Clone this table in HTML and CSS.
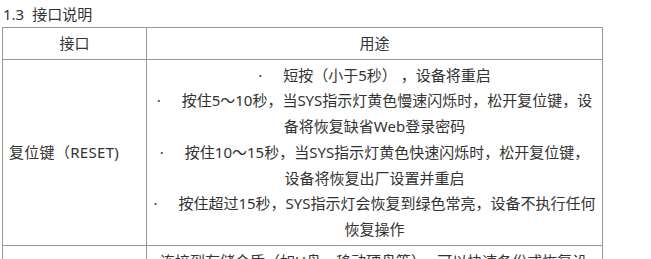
FILE: index.html
```html
<!DOCTYPE html>
<html lang="zh-CN">
<head>
<meta charset="utf-8">
<title>接口说明</title>
<link rel="stylesheet" href="styles.css">
</head>
<body>
<div class="page">
  <h3 class="title"><span class="num">1.3</span>接口说明</h3>
  <table class="spec">
    <colgroup>
      <col class="col-port">
      <col class="col-use">
    </colgroup>
    <thead>
      <tr>
        <th>接口</th>
        <th>用途</th>
      </tr>
    </thead>
    <tbody>
      <tr>
        <td class="name">复位键（RESET)</td>
        <td class="uses">
          <p class="item"><span class="dot">·</span>短按（小于5秒）&nbsp;，设备将重启</p>
          <p class="item"><span class="dot">·</span>按住5～10秒，当SYS指示灯黄色慢速闪烁时，松开复位键，设<br>备将恢复缺省Web登录密码</p>
          <p class="item"><span class="dot">·</span>按住10～15秒，当SYS指示灯黄色快速闪烁时，松开复位键，<br>设备将恢复出厂设置并重启</p>
          <p class="item"><span class="dot">·</span>按住超过15秒，SYS指示灯会恢复到绿色常亮，设备不执行任何<br>恢复操作</p>
        </td>
      </tr>
      <tr>
        <td class="name">USB接口</td>
        <td class="uses">
          <p class="item plain">连接到存储介质（如U盘、移动硬盘等），&nbsp;可以快速备份或恢复设<br>备配置</p>
        </td>
      </tr>
    </tbody>
  </table>
</div>
</body>
</html>
```
FILE: styles.css
```css
html, body {
  margin: 0;
  padding: 0;
  background: #ffffff;
}

body {
  font-family: "Noto Sans", "Noto Sans CJK SC", sans-serif;
  font-size: 15px;
  color: #333333;
}

.page {
  padding: 4px 0 0 2px;
}

.title {
  margin: 0 0 3px 1px;
  font-size: 15px;
  font-weight: normal;
  line-height: 20px;
  color: #333333;
}

.num {
  display: inline-block;
  margin-right: 8px;
}

.spec {
  border-collapse: collapse;
  width: 601px;
  table-layout: fixed;
}

.col-port {
  width: 144px;
}

.spec th,
.spec td {
  border: 1px solid #999999;
  padding: 3px 6px 2px;
  line-height: 25.7px;
  vertical-align: middle;
}

.spec th {
  font-weight: normal;
  text-align: center;
}

.name {
  text-align: left;
  padding-left: 14px;
  letter-spacing: 0.3px;
}

.uses {
  text-align: center;
}

.item {
  margin: 0;
  white-space: nowrap;
}

.dot {
  display: inline-block;
  width: 25px;
  text-align: left;
}

.plain {
  text-align: left;
  padding-left: 7px;
}
```
